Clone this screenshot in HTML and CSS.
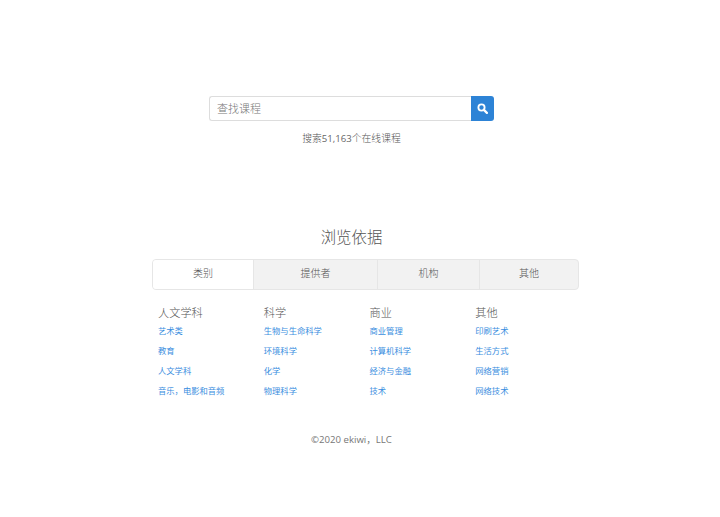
FILE: index.html
```html
<!DOCTYPE html>
<html lang="zh">
<head>
<meta charset="utf-8">
<title>ekiwi</title>
<link rel="stylesheet" href="styles.css">
</head>
<body>
<main class="page">
  <section class="search">
    <form class="search-form">
      <input class="search-input" type="text" placeholder="查找课程">
      <button class="search-btn" type="button" aria-label="搜索">
        <svg width="11" height="11" viewBox="0 0 12 12"><circle cx="4.9" cy="4.9" r="3.4" fill="none" stroke="#fff" stroke-width="2"/><path d="M7.5 7.5L10.8 10.8" stroke="#fff" stroke-width="2.4" stroke-linecap="round"/></svg>
      </button>
    </form>
    <p class="search-note">搜索<span class="num">51,163</span>个在线课程</p>
  </section>
  <section class="browse">
    <h2 class="browse-title">浏览依据</h2>
    <div class="browse-body">
      <div class="tabs">
        <div class="tab tab-active tab-a">类别</div>
        <div class="tab tab-b">提供者</div>
        <div class="tab tab-c">机构</div>
        <div class="tab tab-d">其他</div>
      </div>
      <div class="cols">
        <div class="col">
          <h3 class="col-title">人文学科</h3>
          <a class="link" href="#">艺术类</a>
          <a class="link" href="#">教育</a>
          <a class="link" href="#">人文学科</a>
          <a class="link" href="#">音乐，电影和音频</a>
        </div>
        <div class="col">
          <h3 class="col-title">科学</h3>
          <a class="link" href="#">生物与生命科学</a>
          <a class="link" href="#">环境科学</a>
          <a class="link" href="#">化学</a>
          <a class="link" href="#">物理科学</a>
        </div>
        <div class="col">
          <h3 class="col-title">商业</h3>
          <a class="link" href="#">商业管理</a>
          <a class="link" href="#">计算机科学</a>
          <a class="link" href="#">经济与金融</a>
          <a class="link" href="#">技术</a>
        </div>
        <div class="col">
          <h3 class="col-title">其他</h3>
          <a class="link" href="#">印刷艺术</a>
          <a class="link" href="#">生活方式</a>
          <a class="link" href="#">网络营销</a>
          <a class="link" href="#">网络技术</a>
        </div>
      </div>
    </div>
  </section>
  <footer class="footer">©2020 ekiwi，LLC</footer>
</main>
</body>
</html>
```
FILE: styles.css
```css
* { box-sizing: border-box; }
html, body { margin: 0; padding: 0; background: #fff; }
body {
  font-family: "Open Sans", "Noto Sans CJK SC", sans-serif;
  font-weight: 300;
  color: #666;
  font-size: 10px;
}
.page { display: flex; flex-direction: column; align-items: center; width: 703px; padding-top: 96px; height: 517px; overflow: hidden; }
.search { display: flex; flex-direction: column; align-items: center; }
.search-form { display: flex; width: 285px; height: 25px; }
.search-input {
  flex: 1; min-width: 0; height: 25px; padding: 0 7px;
  border: 1px solid #ddd; border-right: 0; border-radius: 3px 0 0 3px;
  font: 300 11px "Open Sans", "Noto Sans CJK SC", sans-serif; color: #666; outline: none;
}
.search-input::placeholder { color: #777; opacity: 1; }
.search-btn {
  width: 23px; height: 25px; padding: 0; border: 0; border-radius: 0 3px 3px 0;
  background: #2d83d6; display: flex; align-items: center; justify-content: center;
}
.search-note { margin: 10px 0 0; font-size: 9.8px; line-height: 16px; color: #555; }
.num { font-weight: 400; font-size: 9.6px; color: #666; }
.browse { margin-top: 80px; width: 100%; display: flex; flex-direction: column; align-items: center; }
.browse-title { margin: 0; font-weight: 300; font-size: 15.4px; line-height: 22px; text-align: center; color: #555; }
.browse-body { width: 427px; margin: 10px 0 0 28px; }
.tabs { display: flex; height: 31px; border: 1px solid #e6e6e6; border-radius: 4px; overflow: hidden; background: #f2f2f2; }
.tab { display: flex; align-items: center; justify-content: center; padding-bottom: 4px; font-size: 10px; color: #555; border-left: 1px solid #e6e6e6; }
.tab-active { background: #fff; border-left: 0; }
.tab-a { width: 100px; }
.tab-b { width: 124px; }
.tab-c { width: 102px; }
.tab-d { flex: 1; }
.cols { margin-top: 15px; padding-left: 6px; display: grid; grid-template-columns: repeat(4, 105.75px); }
.col { display: flex; flex-direction: column; align-items: flex-start; }
.col-title { margin: 0 0 1px; font-weight: 300; font-size: 11.2px; line-height: 15px; color: #555; }
.link { font-size: 8.3px; line-height: 20px; color: #3a8ee0; font-weight: 400; text-decoration: none; }
.footer { margin-top: 31px; font-size: 9.6px; font-weight: 400; line-height: 16px; color: #777; }
```
